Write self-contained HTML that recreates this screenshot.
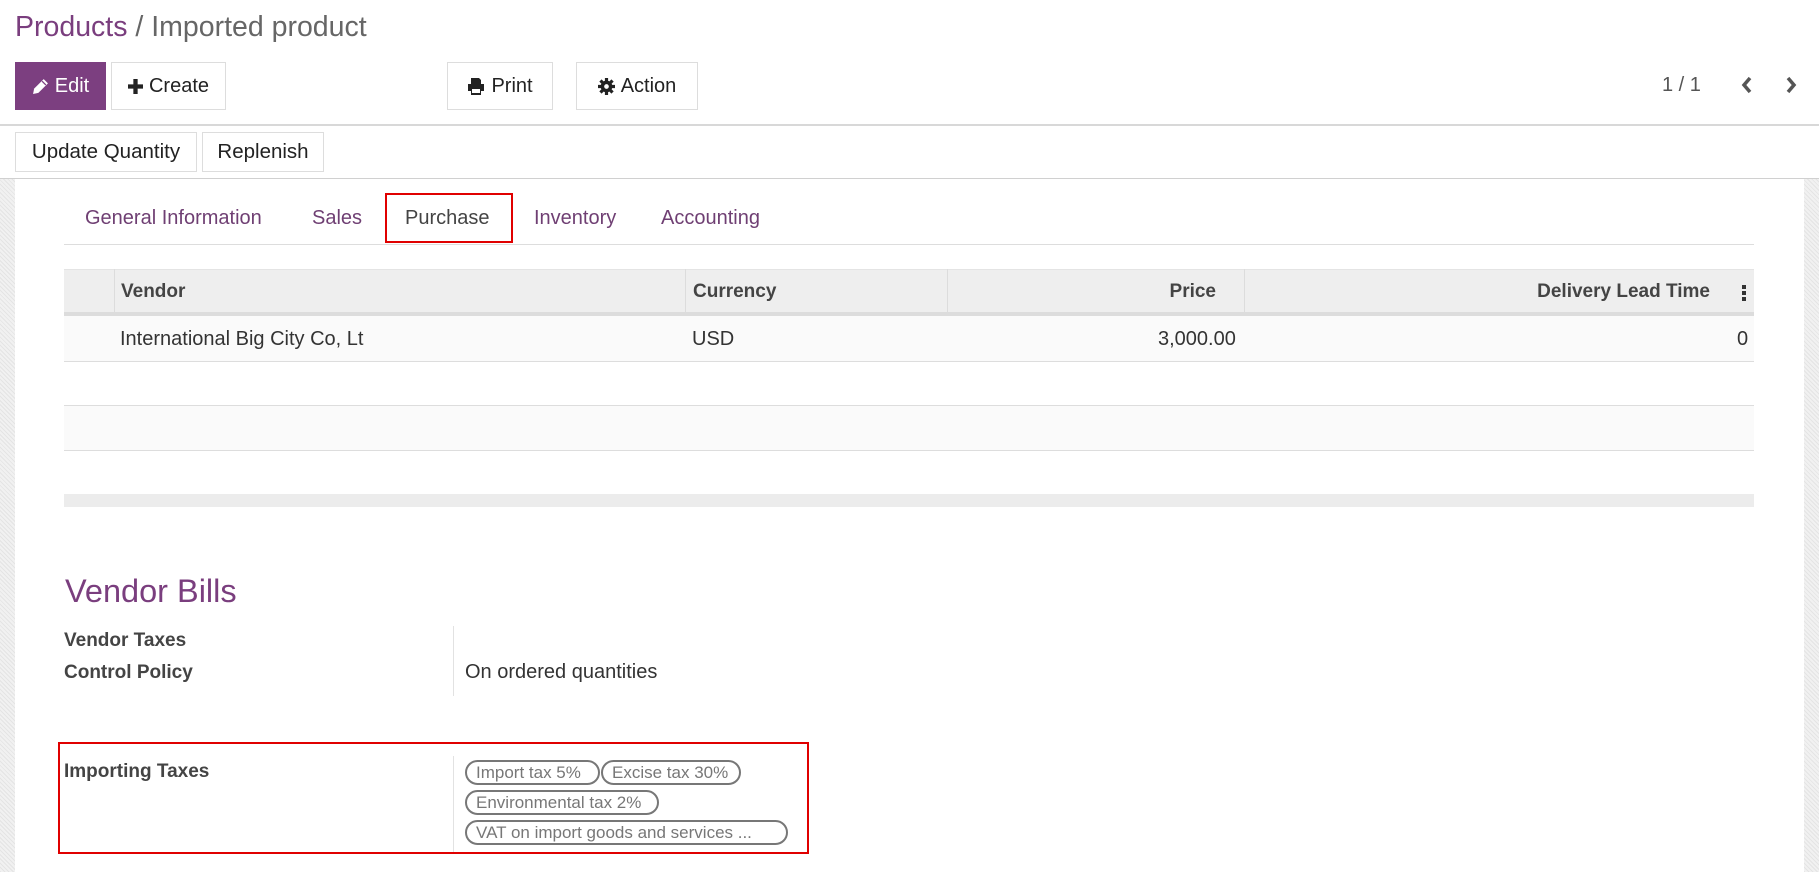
<!DOCTYPE html>
<html><head><meta charset="utf-8"><style>
*{box-sizing:border-box;margin:0;padding:0}
body{width:1819px;height:872px;overflow:hidden;background:#fff;font-family:"Liberation Sans",sans-serif;color:#4c4c4c;position:relative}
.a{position:absolute;white-space:nowrap}
.btn{position:absolute;border:1px solid #ddd;background:#fff;color:#222;font-size:20px;display:flex;align-items:center;justify-content:center;gap:6px}
.strip{position:absolute;top:179px;bottom:0;width:15px;background:#ececec;background-image:repeating-linear-gradient(45deg,#e4e4e4 0 1px,#f1f1f1 1px 3px)}
.tab{position:absolute;top:207px;font-size:20px;color:#6f3f73}
.hl{position:absolute;left:64px;width:1690px;height:1px;background:#ddd}
.th{position:absolute;top:281px;font-size:19px;color:#444;font-weight:bold;white-space:nowrap}
.tag{position:absolute;height:25px;border:2.5px solid #777;border-radius:13px;color:#777;font-size:17px;line-height:21px;padding:0 9px}
.lb{position:absolute;font-size:20px;color:#333;white-space:nowrap}
.b{font-weight:bold;font-size:19px;color:#444}
</style></head><body>
<div class="a" style="left:15px;top:11px;font-size:28.5px;color:#7a3e7e">Products <span style="color:#666">/ Imported product</span></div>

<div class="btn" style="left:15px;top:62px;width:91px;height:48px;background:#7c3f80;border-color:#7c3f80;color:#fff">
<svg width="17" height="17" viewBox="0 0 16 16"><path d="M11 1l4 4-9 9-5 1 1-5z" fill="#fff"/><path d="M9.5 3l3.5 3.5" stroke="#7c3f80" stroke-width="1.2"/></svg>Edit</div>
<div class="btn" style="left:111px;top:62px;width:115px;height:48px"><svg width="15" height="15" viewBox="0 0 14 14"><path d="M5 0h4v5h5v4H9v5H5V9H0V5h5z" fill="#222"/></svg>Create</div>
<div class="btn" style="left:447px;top:62px;width:106px;height:48px"><svg width="18" height="17" viewBox="0 0 18 17"><path d="M4 0h8l2 2v4H4z M1 6h16v7h-3v4H4v-4H1z" fill="#222"/><rect x="5" y="11" width="8" height="4" fill="#fff"/></svg>Print</div>
<div class="btn" style="left:576px;top:62px;width:122px;height:48px"><svg width="17" height="17" viewBox="0 0 16 16"><g fill="#222"><circle cx="8" cy="8" r="5.5"/><g stroke="#222" stroke-width="3"><path d="M8 0v16M0 8h16M2.3 2.3l11.4 11.4M13.7 2.3L2.3 13.7"/></g></g><circle cx="8" cy="8" r="2.2" fill="#fff"/></svg>Action</div>

<div class="a" style="left:1662px;top:74px;font-size:20px;color:#555">1 / 1</div>
<svg class="a" style="left:1740px;top:76px" width="14" height="18" viewBox="0 0 14 18"><path d="M10 2L4 9l6 7" stroke="#555" stroke-width="3.5" fill="none"/></svg>
<svg class="a" style="left:1784px;top:76px" width="14" height="18" viewBox="0 0 14 18"><path d="M4 2l6 7-6 7" stroke="#555" stroke-width="3.5" fill="none"/></svg>

<div class="a" style="left:0;top:124px;width:1819px;height:2px;background:#d8d8d8"></div>
<div class="btn" style="left:15px;top:132px;width:182px;height:40px;font-size:20.5px">Update Quantity</div>
<div class="btn" style="left:202px;top:132px;width:122px;height:40px;font-size:20.5px">Replenish</div>
<div class="a" style="left:0;top:178px;width:1819px;height:1px;background:#d0d0d0"></div>
<div class="strip" style="left:0"></div>
<div class="strip" style="left:1804px"></div>

<div class="tab" style="left:85px">General Information</div>
<div class="tab" style="left:312px">Sales</div>
<div class="tab" style="left:405px;color:#444">Purchase</div>
<div class="tab" style="left:534px">Inventory</div>
<div class="tab" style="left:661px">Accounting</div>
<div class="a" style="left:385px;top:193px;width:128px;height:50px;border:2.5px solid #e00000"></div>
<div class="hl" style="top:244px"></div>

<div class="a" style="left:64px;top:269px;width:1690px;height:47px;background:#eee;border-bottom:4px solid #dcdcdc;border-top:1px solid #e4e4e4"></div>
<div class="a" style="left:114px;top:269px;width:1px;height:43px;background:#dcdcdc"></div>
<div class="a" style="left:685px;top:269px;width:1px;height:43px;background:#dcdcdc"></div>
<div class="a" style="left:947px;top:269px;width:1px;height:43px;background:#dcdcdc"></div>
<div class="a" style="left:1244px;top:269px;width:1px;height:43px;background:#dcdcdc"></div>
<div class="th" style="left:121px">Vendor</div>
<div class="th" style="left:693px">Currency</div>
<div class="th" style="right:603px">Price</div>
<div class="th" style="right:109px">Delivery Lead Time</div>
<div class="a" style="left:1742px;top:285px;width:4px;height:16px;background:repeating-linear-gradient(#333 0 4px,transparent 4px 6px)"></div>

<div class="a" style="left:64px;top:316px;width:1690px;height:45px;background:#fafafa"></div>
<div class="lb" style="left:120px;top:328px">International Big City Co, Lt</div>
<div class="lb" style="left:692px;top:328px">USD</div>
<div class="lb" style="left:1158px;top:328px">3,000.00</div>
<div class="lb" style="left:1737px;top:328px">0</div>
<div class="hl" style="top:361px"></div>
<div class="a" style="left:64px;top:406px;width:1690px;height:44px;background:#fafafa"></div>
<div class="hl" style="top:405px"></div>
<div class="hl" style="top:450px"></div>
<div class="hl" style="top:494px;height:13px;background:#ececec"></div>

<div class="a" style="left:65px;top:573px;font-size:32.5px;color:#7a3e7e">Vendor Bills</div>
<div class="lb b" style="left:64px;top:630px">Vendor Taxes</div>
<div class="lb b" style="left:64px;top:662px">Control Policy</div>
<div class="a" style="left:453px;top:626px;width:1px;height:70px;background:#e2e2e2"></div>
<div class="lb" style="left:465px;top:661px">On ordered quantities</div>

<div class="a" style="left:58px;top:742px;width:751px;height:112px;border:2.5px solid #e00000"></div>
<div class="lb b" style="left:64px;top:761px">Importing Taxes</div>
<div class="a" style="left:453px;top:756px;width:1px;height:96px;background:#e2e2e2"></div>
<div class="tag" style="left:465px;top:760px;width:135px">Import tax 5%</div>
<div class="tag" style="left:601px;top:760px;width:140px">Excise tax 30%</div>
<div class="tag" style="left:465px;top:790px;width:194px">Environmental tax 2%</div>
<div class="tag" style="left:465px;top:820px;width:323px">VAT on import goods and services ...</div>
</body></html>
